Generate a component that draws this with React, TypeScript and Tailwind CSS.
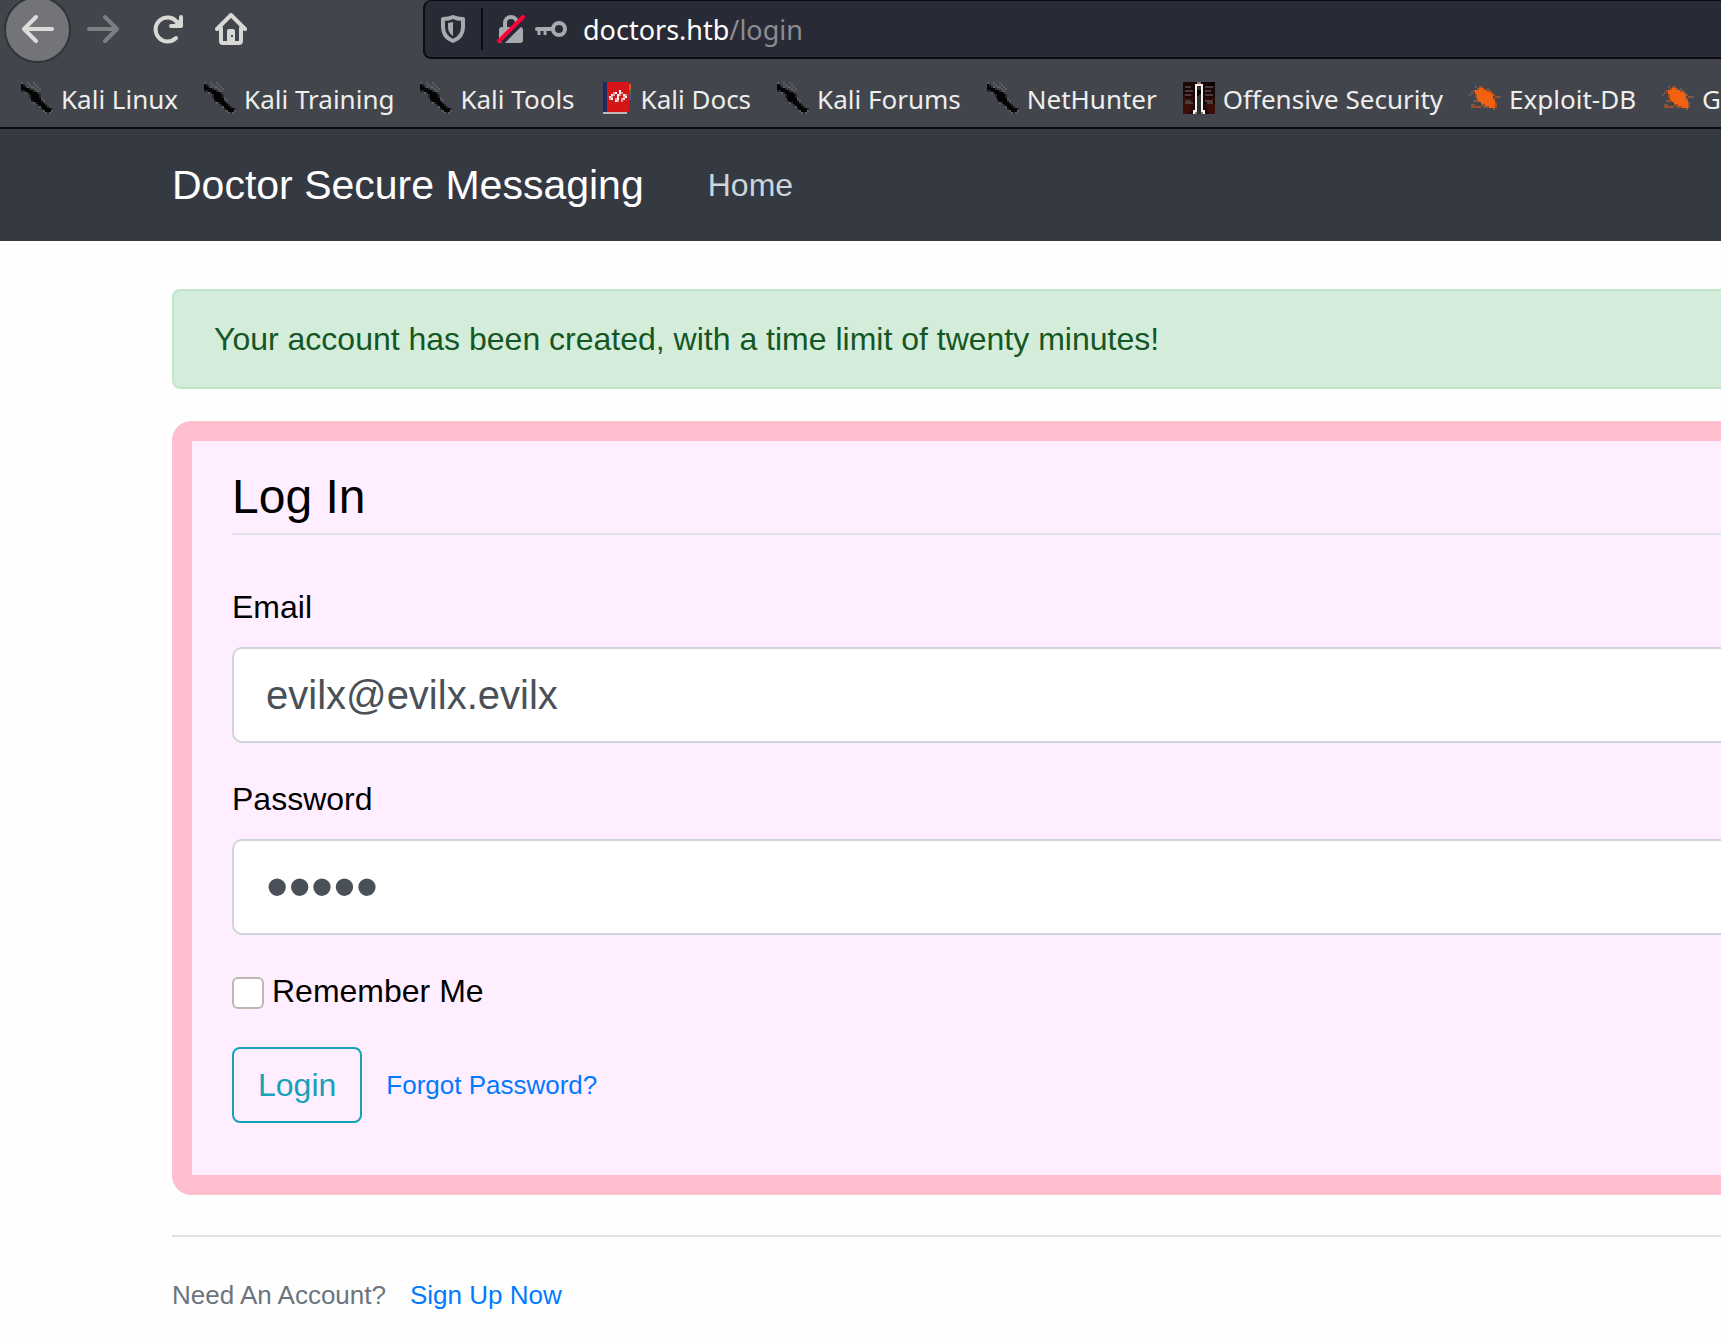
import { type ReactNode } from "react";

/* 16x16 favicons, one character per cell, "." is transparent. */
const dragonRows = [
  "h..h..h.........",
  "kg..h..h........",
  "kkgh.hh.h.......",
  "kkkkg..h.h......",
  "ggkkkkg.h.......",
  "..hgkkkkg.......",
  "....gkkkkg......",
  "....gkkkkg......",
  ".....kkkkkh.....",
  ".....gkkkkgh....",
  "......hgkkkg....",
  "........gkkkg...",
  ".........hkkkg..",
  "..........gkkkkg",
  "...........hkkkh",
  "............hgh.",
];

const bugRows = [
  "................",
  "................",
  "...h.dd.........",
  "....dood.h......",
  "..doooooodd.....",
  ".d.ooooooood....",
  "h..dooooooood...",
  "...doooooooo.ddh",
  "....ooooooood...",
  "..hddoooooooo...",
  "......oooooood..",
  ".hd...ddoooood..",
  ".ddddd.hddoood..",
  "............d...",
  "................",
  "................",
];

const docsRows = [
  ".bbrrrrrrrrrrr..",
  ".bbrrrrrrrrrrrc.",
  ".bbrrrrrrrrrrrc.",
  ".bbrrrrrrrrrrrc.",
  ".bbrrrrrrwrrrre.",
  ".bbrrrpwrwprrre.",
  ".bbrrwprwprwprf.",
  ".bbrwprrwrrpwrf.",
  ".bbrpwrpwrpwrrf.",
  ".bbrrrrwprprrr..",
  ".bbrrrrrrrrrrr..",
  ".bbrrrrrrrrrrr..",
  ".bbrrrrrrrrrrr..",
  ".bbrrrrrrrrrrr..",
  ".bbrrrrrrrrrrr..",
  ".llllllllllll...",
];

const offsecRows = [
  "mmmmmmmttmmmmmkk",
  "mmmmmmwwwwmmkkkk",
  "mnnnmmwjjwmnnnnm",
  "mmmmmmwjjwmmmmmm",
  "mnnnnmwkkwmnnnmm",
  "mmmmmmwkkwmmmmmm",
  "snnnsmwkjwmnnnnm",
  "smmmmmwjjwmmmmmm",
  "sssssmwjjwmssmss",
  "mnnnmmwjjwmnnnnm",
  "snnnnmwjjwmmnnnm",
  "sssssmwjjwmsssss",
  "ssssmmwjjwmsssss",
  "sssssmwjjwmmssss",
  "ssssmwwjjwwmssss",
  "sssmmwtjjtwmmsss",
];

const palette: Record<string, string> = {
  g: "#26272a",
  h: "#5c5c60",
  k: "#030304",
  d: "#9a5129",
  o: "#f0620f",
  b: "#1d2b5e",
  r: "#d51518",
  w: "#fbf3f3",
  p: "#eb9a9b",
  c: "#c8621f",
  e: "#3f7447",
  f: "#41558c",
  l: "#c5b5b7",
  m: "#1c0707",
  n: "#4a3c3c",
  s: "#3d0b09",
  j: "#29302f",
  t: "#8a7a70",
};

function PixelIcon({ rows }: { rows: string[] }) {
  return (
    <svg viewBox="0 0 16 16" className="size-8 shrink-0" shapeRendering="crispEdges" aria-hidden="true">
      {rows.flatMap((row, y) =>
        row.split("").map((c, x) =>
          c === "." ? null : <rect key={`${x}-${y}`} x={x} y={y} width="1" height="1" fill={palette[c]} />
        )
      )}
    </svg>
  );
}

const bookmarks: { label: string; icon: ReactNode }[] = [
  { label: "Kali Linux", icon: <PixelIcon rows={dragonRows} /> },
  { label: "Kali Training", icon: <PixelIcon rows={dragonRows} /> },
  { label: "Kali Tools", icon: <PixelIcon rows={dragonRows} /> },
  { label: "Kali Docs", icon: <PixelIcon rows={docsRows} /> },
  { label: "Kali Forums", icon: <PixelIcon rows={dragonRows} /> },
  { label: "NetHunter", icon: <PixelIcon rows={dragonRows} /> },
  { label: "Offensive Security", icon: <PixelIcon rows={offsecRows} /> },
  { label: "Exploit-DB", icon: <PixelIcon rows={bugRows} /> },
  { label: "GHDB", icon: <PixelIcon rows={bugRows} /> },
];

function BrowserChrome() {
  return (
    <div className="h-[129px] overflow-hidden border-b-2 border-[#0c0c0f] bg-[#43454c] font-['Noto_Sans',sans-serif] text-[#eeeeec]">
      <div className="flex h-[59px] items-start">
        <div className="flex h-[58px] w-[423px] shrink-0 items-center">
          <button
            type="button"
            aria-label="Back"
            className="ml-1 flex size-[67px] shrink-0 items-center justify-center rounded-full border-2 border-[#323338] bg-[#737478]"
          >
            <svg viewBox="0 0 32 32" className="size-8" fill="none" stroke="#dcdcd9" strokeWidth="4" strokeLinecap="round" strokeLinejoin="round">
              <path d="M30 16H3M14 4L2 16l12 12" />
            </svg>
          </button>
          <button type="button" aria-label="Forward" className="ml-4 size-8">
            <svg viewBox="0 0 32 32" className="size-8" fill="none" stroke="#7d7e81" strokeWidth="4" strokeLinecap="round" strokeLinejoin="round">
              <path d="M2 16h27M18 4l12 12-12 12" />
            </svg>
          </button>
          <button type="button" aria-label="Reload" className="ml-8 size-8">
            <svg viewBox="0 0 32 32" className="size-8" fill="none" stroke="#d8d8d5" strokeWidth="4" strokeLinecap="round" strokeLinejoin="round">
              <path d="M25 25a12 12 0 1 1 1-16" />
              <path d="M30 4v9h-10" />
              <path d="M30 6v7h-7z" fill="#d8d8d5" strokeWidth="2" />
            </svg>
          </button>
          <button type="button" aria-label="Home" className="ml-8 size-8">
            <svg viewBox="0 0 32 32" className="size-8" fill="none" stroke="#d8d8d5" strokeWidth="4" strokeLinecap="round" strokeLinejoin="round">
              <path d="M2 16L16 2l14 14" />
              <path d="M6 15v13q0 2 2 2h16q2 0 2-2V15" />
              <path d="M12 30V18q0-2 2-2h4q2 0 2 2v12z" fill="#d8d8d5" stroke="none" />
              <path d="M16 22h2v2h-2z" fill="#43454c" stroke="none" />
            </svg>
          </button>
        </div>
        <div className="flex h-[59px] flex-1 items-center rounded-l-lg border-2 border-r-0 border-t border-[#0c0c0f] bg-[#282a35]">
          <svg viewBox="0 0 24 28" className="ml-4 h-7 w-6 shrink-0" fill="none" aria-hidden="true">
            <path d="M2 4q6 0 10-2 4 2 10 2v8q0 10-10 14Q2 22 2 12z" stroke="#a9aaae" strokeWidth="4" strokeLinejoin="round" />
            <path d="M12 7v14q-5-3-5-9V8z" fill="#a9aaae" />
          </svg>
          <span className="ml-4 h-[42px] w-[2px] bg-[#0c0c0f]" />
          <svg viewBox="0 0 28 28" className="ml-[14px] size-7 shrink-0" fill="none" aria-hidden="true">
            <path d="M8 14V8a6 6 0 0 1 12 0v6" stroke="#a9aaae" strokeWidth="4" />
            <rect x="2" y="12" width="24" height="16" rx="3" fill="#a9aaae" />
            <path d="M5 28L28 5" stroke="#282a35" strokeWidth="4" />
            <path d="M2 26L26 2" stroke="#ff0039" strokeWidth="4" strokeLinecap="round" />
          </svg>
          <svg viewBox="0 0 32 16" className="ml-[10px] h-4 w-8 shrink-0" fill="none" stroke="#a9aaae" aria-hidden="true">
            <circle cx="24" cy="8" r="6" strokeWidth="4" />
            <path d="M18 8H2" strokeWidth="4" strokeLinecap="round" />
            <path d="M4 8v6M10 8v6" strokeWidth="3" />
          </svg>
          <span className="ml-4 pt-[2px] text-[27px] text-white">
            doctors.htb<span className="text-[#8b8c93]">/login</span>
          </span>
        </div>
      </div>
      <nav aria-label="Bookmarks" className="flex h-[68px] items-center gap-[26px] pt-[10px] pl-[21px] text-[26px] leading-9">
        {bookmarks.map((b) => (
          <a key={b.label} href="#" className="flex shrink-0 items-center gap-2 whitespace-nowrap">
            {b.icon}
            <span className="pt-[2px]">{b.label}</span>
          </a>
        ))}
      </nav>
    </div>
  );
}

export default function App() {
  return (
    <div className="min-h-screen overflow-x-hidden bg-[#fefefe] font-['Liberation_Sans',Arial,sans-serif] text-[32px] leading-[48px] text-black">
      <BrowserChrome />
      <header className="flex h-28 items-center bg-[#353942] pl-[172px]">
        <a href="#" className="text-[41px] leading-[60px] text-white">
          Doctor Secure Messaging
        </a>
        <nav className="ml-12 px-4">
          <a href="#" className="text-[#cbd5db]">
            Home
          </a>
        </nav>
      </header>
      <main className="pt-12 pl-[172px]">
        <div role="alert" className="mb-8 rounded-l-lg border-2 border-r-0 border-[#c3e6cb] bg-[#d4edda] px-10 py-6 text-[#155724]">
          Your account has been created, with a time limit of twenty minutes!
        </div>
        <section className="rounded-l-[20px] border-20 border-r-0 border-[#ffbfcf] bg-[#ffeeff] py-5 pl-10">
          <form onSubmit={(e) => e.preventDefault()}>
            <h1 className="mb-12 border-b-2 border-[#dee2e6] text-[48px] leading-[72px]">Log In</h1>
            <div className="mb-8">
              <label htmlFor="email" className="mb-4 block">
                Email
              </label>
              <input
                id="email"
                type="email"
                defaultValue="evilx@evilx.evilx"
                className="block h-24 w-full rounded-l-[10px] border-2 border-r-0 border-[#ced4da] bg-white px-8 text-[40px] text-[#495057]"
              />
            </div>
            <div className="mb-8">
              <label htmlFor="password" className="mb-4 block">
                Password
              </label>
              <input
                id="password"
                type="password"
                defaultValue="evilx"
                className="block h-24 w-full rounded-l-[10px] border-2 border-r-0 border-[#ced4da] bg-white px-8 text-[64px] text-[#495057]"
              />
            </div>
            <div className="mb-8 flex items-center gap-2">
              <input
                id="remember"
                type="checkbox"
                className="mt-1 size-8 appearance-none rounded-md border-2 border-[#bfb8b1] bg-white checked:bg-[#17a2b8]"
              />
              <label htmlFor="remember">Remember Me</label>
            </div>
            <div className="mb-8 flex items-center gap-6">
              <button type="submit" className="rounded-lg border-2 border-[#17a2b8] px-6 py-3 text-[#17a2b8]">
                Login
              </button>
              <a href="#" className="text-[26px] text-[#007bff]">
                Forgot Password?
              </a>
            </div>
          </form>
        </section>
        <p className="mt-10 border-t-2 border-[#dee2e6] pt-8">
          <small className="text-[26px] text-[#6c757d]">
            Need An Account?
            <a href="#" className="ml-6 text-[#007bff]">
              Sign Up Now
            </a>
          </small>
        </p>
      </main>
    </div>
  );
}
